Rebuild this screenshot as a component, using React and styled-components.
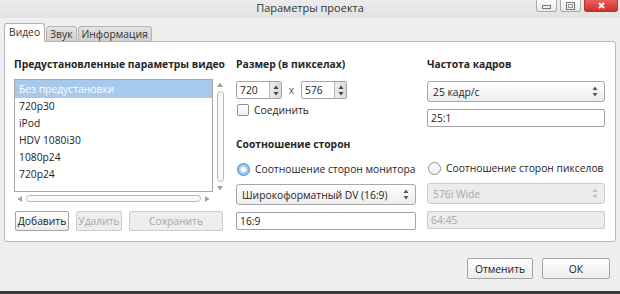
import styled, { createGlobalStyle } from "styled-components";

const GlobalStyle = createGlobalStyle`
  html, body { margin: 0; padding: 0; }
  body {
    width: 620px;
    height: 294px;
    overflow: hidden;
    background: #efefef;
    font-family: "Open Sans", "DejaVu Sans", sans-serif;
    font-size: 10.3px;
    color: #262626;
  }
  * { box-sizing: border-box; }
`;

const Window = styled.div`
  width: 620px;
  height: 294px;
  display: flex;
  flex-direction: column;
  background: #efefef;
  border-bottom: 3px solid #3a3a3a;
`;

const TitleBar = styled.div`
  height: 18px;
  position: relative;
  background: linear-gradient(#ececec, #e3e3e3);
`;

const Title = styled.div`
  text-align: center;
  line-height: 16px;
  font-size: 11px;
  color: #333;
`;

const WinButtons = styled.div`
  position: absolute;
  top: 0;
  right: 2px;
  display: flex;
  gap: 3px;
`;

const WinButton = styled.div`
  width: ${(p) => (p.$close ? "34px" : "21px")};
  height: 12px;
  display: flex;
  align-items: center;
  justify-content: center;
  border: 1px solid ${(p) => (p.$close ? "#b8342c" : "#a9a9a9")};
  border-top: none;
  border-radius: 0 0 3px 3px;
  background: ${(p) =>
    p.$close ? "linear-gradient(#e8605a, #cc3129)" : "linear-gradient(#fdfdfd, #e9e9e9)"};
`;

const TabBar = styled.div`
  height: 24px;
  display: flex;
  align-items: flex-end;
  padding-left: 4px;
  position: relative;
  z-index: 1;
  margin-bottom: -1px;
`;

const Tab = styled.div`
  height: ${(p) => (p.$active ? "19px" : "16px")};
  padding: 0 ${(p) => (p.$active ? "4px" : "3px")};
  margin-right: 1px;
  line-height: ${(p) => (p.$active ? "17px" : "15px")};
  border: 1px solid #b3b3b3;
  border-bottom: ${(p) => (p.$active ? "1px solid #fff" : "1px solid #b3b3b3")};
  border-radius: 3px 3px 0 0;
  background: ${(p) => (p.$active ? "#fff" : "linear-gradient(#e3e3e3, #d0d0d0)")};
  color: #333;
`;

const Panel = styled.div`
  margin: 0 4px;
  border: 1px solid #b8b8b8;
  border-radius: 0 3px 3px 3px;
  background: #fff;
  padding: 15px 9px 10px 9px;
  display: grid;
  grid-template-columns: 211px 180px 178px;
  column-gap: 11px;
`;

const Column = styled.div`
  display: flex;
  flex-direction: column;
`;

const Heading = styled.div`
  font-weight: bold;
  line-height: 15px;
  height: 15px;
  white-space: nowrap;
  margin-top: ${(p) => p.$mt || 0}px;
  color: #262626;
`;

const ListRow = styled.div`
  margin-top: 7px;
  display: flex;
  height: 113px;
`;

const List = styled.div`
  width: 199px;
  border: 1px solid #a8a8a8;
  display: flex;
  flex-direction: column;
`;

const Item = styled.div`
  height: ${(p) => (p.$selected ? "18px" : "17px")};
  line-height: ${(p) => (p.$selected ? "18px" : "17px")};
  padding-left: 4px;
  background: ${(p) => (p.$selected ? "#a7c9ec" : "transparent")};
  color: ${(p) => (p.$selected ? "#fff" : "#222")};
  white-space: nowrap;
`;

const VScroll = styled.div`
  width: 12px;
  display: flex;
  flex-direction: column;
  align-items: center;
  padding: 3px 0 1px 2px;
  gap: 3px;
`;

const VTrack = styled.div`
  flex: 1;
  width: 7px;
  border: 1px solid #b8b8b8;
  border-radius: 4px;
  background: #fafafa;
`;

const HScroll = styled.div`
  width: 199px;
  height: 11px;
  display: flex;
  align-items: center;
  padding: 0 3px;
  gap: 3px;
  margin-top: 1px;
`;

const HTrack = styled.div`
  flex: 1;
  height: 7px;
  border: 1px solid #b8b8b8;
  border-radius: 4px;
  background: #fafafa;
`;

const ButtonRow = styled.div`
  display: flex;
  gap: 7px;
  margin-top: 7px;
  padding-left: 1px;
`;

const Button = styled.div`
  width: ${(p) => p.$w}px;
  height: ${(p) => p.$h || 20}px;
  display: flex;
  align-items: center;
  justify-content: center;
  border: 1px solid ${(p) => (p.$disabled ? "#cdcdcd" : "#a3a3a3")};
  border-radius: 2px;
  background: ${(p) =>
    p.$disabled ? "#ededed" : "linear-gradient(#ffffff, #ececec)"};
  color: ${(p) => (p.$disabled ? "#a9a9a9" : "#222")};
  white-space: nowrap;
`;

const SpinRow = styled.div`
  display: flex;
  align-items: center;
  margin-top: 9px;
  height: 18px;
`;

const SpinBox = styled.div`
  width: 46px;
  height: 18px;
  display: flex;
  border: 1px solid #a5a5a5;
  border-radius: 2px;
  background: #fff;
`;

const SpinText = styled.div`
  flex: 1;
  padding-left: 3px;
  line-height: 16px;
`;

const SpinButton = styled.div`
  width: 12px;
  border-left: 1px solid #b5b5b5;
  background: linear-gradient(90deg, #ededed, #d9d9d9);
  display: flex;
  align-items: center;
  justify-content: center;
`;

const Times = styled.div`
  width: 19px;
  text-align: center;
  color: #555;
`;

const Check = styled.div`
  display: flex;
  align-items: center;
  gap: 5px;
  margin-top: ${(p) => p.$mt || 0}px;
  height: 14px;
  padding-left: 1px;
  white-space: nowrap;
  color: #262626;
`;

const CheckBox = styled.div`
  flex-shrink: 0;
  width: 12px;
  height: 12px;
  border: 1px solid #8e8e8e;
  border-radius: 2px;
  background: linear-gradient(#fff, #eee);
`;

const Radio = styled.div`
  flex-shrink: 0;
  width: 13px;
  height: 13px;
  border-radius: 50%;
  border: 1px solid ${(p) => (p.$on ? "#4f8fd1" : "#8e8e8e")};
  background: ${(p) =>
    p.$on
      ? "radial-gradient(circle, #ffffff 0 2px, #bcd8f3 3px, #7fb1e3 6px)"
      : "linear-gradient(#fff, #eee)"};
`;

const Combo = styled.div`
  height: 21px;
  margin-top: ${(p) => p.$mt || 0}px;
  display: flex;
  align-items: center;
  justify-content: space-between;
  padding: 0 6px 0 5px;
  border: 1px solid ${(p) => (p.$disabled ? "#cdcdcd" : "#a8a8a8")};
  border-radius: 3px;
  background: ${(p) =>
    p.$disabled ? "#ececec" : "linear-gradient(#ffffff, #ededed)"};
  color: ${(p) => (p.$disabled ? "#a8a8a8" : "#262626")};
  white-space: nowrap;
`;

const LineEdit = styled.div`
  height: 18px;
  margin-top: ${(p) => p.$mt || 0}px;
  line-height: 16px;
  padding-left: 3px;
  border: 1px solid ${(p) => (p.$disabled ? "#cdcdcd" : "#a2a2a2")};
  border-radius: 2px;
  background: ${(p) => (p.$disabled ? "#ececec" : "#fff")};
  color: ${(p) => (p.$disabled ? "#a8a8a8" : "#222")};
`;

const Footer = styled.div`
  display: flex;
  justify-content: flex-end;
  gap: 9px;
  padding: 16px 10px 0 0;
`;

const Updown = ({ color = "#555" }) => (
  <svg width="6" height="11" viewBox="0 0 6 11">
    <path d="M3 0.5 L5.5 4 L0.5 4 Z" fill={color} />
    <path d="M3 10.5 L5.5 7 L0.5 7 Z" fill={color} />
  </svg>
);

const Arrow = ({ dir }) => {
  const d = {
    up: "M3 0.5 L6 5 L0 5 Z",
    down: "M3 5.5 L6 1 L0 1 Z",
    left: "M0.5 3 L5 0 L5 6 Z",
    right: "M5.5 3 L1 0 L1 6 Z",
  }[dir];
  return (
    <svg width="6" height="6" viewBox="0 0 6 6">
      <path d={d} fill="#a0a0a0" />
    </svg>
  );
};

const presets = ["720p30", "iPod", "HDV 1080i30", "1080p24", "720p24"];

export default function App() {
  return (
    <>
      <GlobalStyle />
      <Window>
        <TitleBar>
          <Title>Параметры проекта</Title>
          <WinButtons>
            <WinButton>
              <svg width="9" height="6" viewBox="0 0 9 6">
                <rect x="0.5" y="2.5" width="8" height="3" fill="none" stroke="#777" />
              </svg>
            </WinButton>
            <WinButton>
              <svg width="9" height="8" viewBox="0 0 9 8">
                <rect x="0.5" y="0.5" width="8" height="7" fill="none" stroke="#777" />
                <rect x="2.5" y="2.5" width="4" height="3" fill="none" stroke="#999" />
              </svg>
            </WinButton>
            <WinButton $close>
              <svg width="7" height="7" viewBox="0 0 7 7">
                <path d="M1 1 L6 6 M6 1 L1 6" stroke="#fff" strokeWidth="2" />
              </svg>
            </WinButton>
          </WinButtons>
        </TitleBar>

        <TabBar>
          <Tab $active>Видео</Tab>
          <Tab>Звук</Tab>
          <Tab>Информация</Tab>
        </TabBar>

        <Panel>
          <Column>
            <Heading>Предустановленные параметры видео</Heading>
            <ListRow>
              <List>
                <Item $selected>Без предустановки</Item>
                {presets.map((p) => (
                  <Item key={p}>{p}</Item>
                ))}
              </List>
              <VScroll>
                <Arrow dir="up" />
                <VTrack />
                <Arrow dir="down" />
              </VScroll>
            </ListRow>
            <HScroll>
              <Arrow dir="left" />
              <HTrack />
              <Arrow dir="right" />
            </HScroll>
            <ButtonRow>
              <Button $w={54}>Добавить</Button>
              <Button $w={46} $disabled>Удалить</Button>
              <Button $w={94} $disabled>Сохранить</Button>
            </ButtonRow>
          </Column>

          <Column>
            <Heading>Размер (в пикселах)</Heading>
            <SpinRow>
              <SpinBox>
                <SpinText>720</SpinText>
                <SpinButton>
                  <Updown color="#444" />
                </SpinButton>
              </SpinBox>
              <Times>x</Times>
              <SpinBox>
                <SpinText>576</SpinText>
                <SpinButton>
                  <Updown color="#444" />
                </SpinButton>
              </SpinBox>
            </SpinRow>
            <Check $mt={4}>
              <CheckBox />
              Соединить
            </Check>
            <Heading $mt={20}>Соотношение сторон</Heading>
            <Check $mt={10}>
              <Radio $on />
              Соотношение сторон монитора
            </Check>
            <Combo $mt={8}>
              Широкоформатный DV (16:9)
              <Updown />
            </Combo>
            <LineEdit $mt={7}>16:9</LineEdit>
          </Column>

          <Column>
            <Heading>Частота кадров</Heading>
            <Combo $mt={9}>
              25 кадр/с
              <Updown />
            </Combo>
            <LineEdit $mt={7}>25:1</LineEdit>
            <Check $mt={34}>
              <Radio />
              Соотношение сторон пикселов
            </Check>
            <Combo $mt={8} $disabled>
              576i Wide
              <Updown color="#bdbdbd" />
            </Combo>
            <LineEdit $mt={7} $disabled>64:45</LineEdit>
          </Column>
        </Panel>

        <Footer>
          <Button $w={66} $h={21}>Отменить</Button>
          <Button $w={68} $h={21}>ОК</Button>
        </Footer>
      </Window>
    </>
  );
}
